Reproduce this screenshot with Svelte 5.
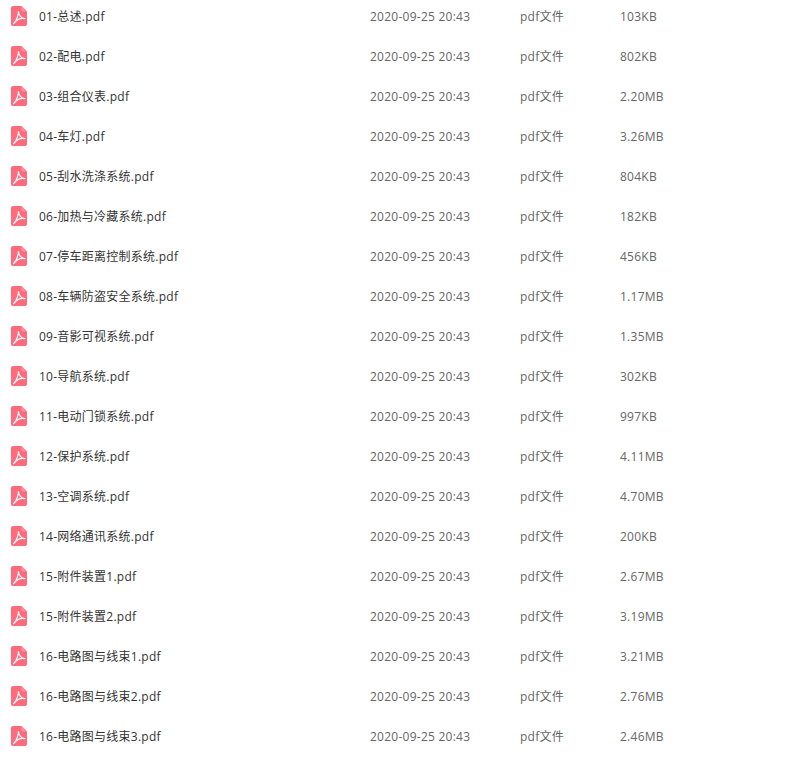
<script lang="ts">
	const files = [
		['01-总述.pdf', '103KB'],
		['02-配电.pdf', '802KB'],
		['03-组合仪表.pdf', '2.20MB'],
		['04-车灯.pdf', '3.26MB'],
		['05-刮水洗涤系统.pdf', '804KB'],
		['06-加热与冷藏系统.pdf', '182KB'],
		['07-停车距离控制系统.pdf', '456KB'],
		['08-车辆防盗安全系统.pdf', '1.17MB'],
		['09-音影可视系统.pdf', '1.35MB'],
		['10-导航系统.pdf', '302KB'],
		['11-电动门锁系统.pdf', '997KB'],
		['12-保护系统.pdf', '4.11MB'],
		['13-空调系统.pdf', '4.70MB'],
		['14-网络通讯系统.pdf', '200KB'],
		['15-附件装置1.pdf', '2.67MB'],
		['15-附件装置2.pdf', '3.19MB'],
		['16-电路图与线束1.pdf', '3.21MB'],
		['16-电路图与线束2.pdf', '2.76MB'],
		['16-电路图与线束3.pdf', '2.46MB']
	];
</script>

<div class="list">
	{#each files as [name, size]}
		<div class="row">
			<svg class="icon" width="16" height="20" viewBox="0 0 16 20">
				<path d="M2 0H10.500L16 5.500V18a2 2 0 0 1-2 2H2a2 2 0 0 1-2-2V2a2 2 0 0 1 2-2Z" fill="#ff6b7d" />
				<path d="M10.500 0L16 5.500H12a1.500 1.500 0 0 1-1.500-1.500Z" fill="#ff8d9a" />
				<path
					d="M7.400 5.500C7.300 9 5.800 14 2.700 17.500M7.400 5.500C7.800 9 9.800 12 13.800 12.700M13.800 12.700C10.500 12 6 13.500 2.700 17.500"
					fill="none"
					stroke="#fff"
					stroke-width="1.200"
					stroke-linecap="round"
				/>
			</svg>
			<span class="name">{name}</span>
			<span class="date">2020-09-25 20:43</span>
			<span class="type">pdf文件</span>
			<span class="size">{size}</span>
		</div>
	{/each}
</div>

<style>
	:global(body) {
		background: #fff;
	}

	.list {
		display: flex;
		flex-direction: column;
		margin-top: -3px;
		font-family: 'Open Sans', 'Noto Sans CJK SC', sans-serif;
		font-size: 12px;
		letter-spacing: 0.25px;
		line-height: 20px;
	}

	.row {
		display: grid;
		grid-template-columns: 370px 150px 100px 1fr;
		align-items: center;
		height: 40px;
		position: relative;
		color: #666;
	}

	.icon {
		position: absolute;
		left: 11px;
		top: 9px;
	}

	.name {
		padding-left: 39px;
		color: #333;
	}
</style>
